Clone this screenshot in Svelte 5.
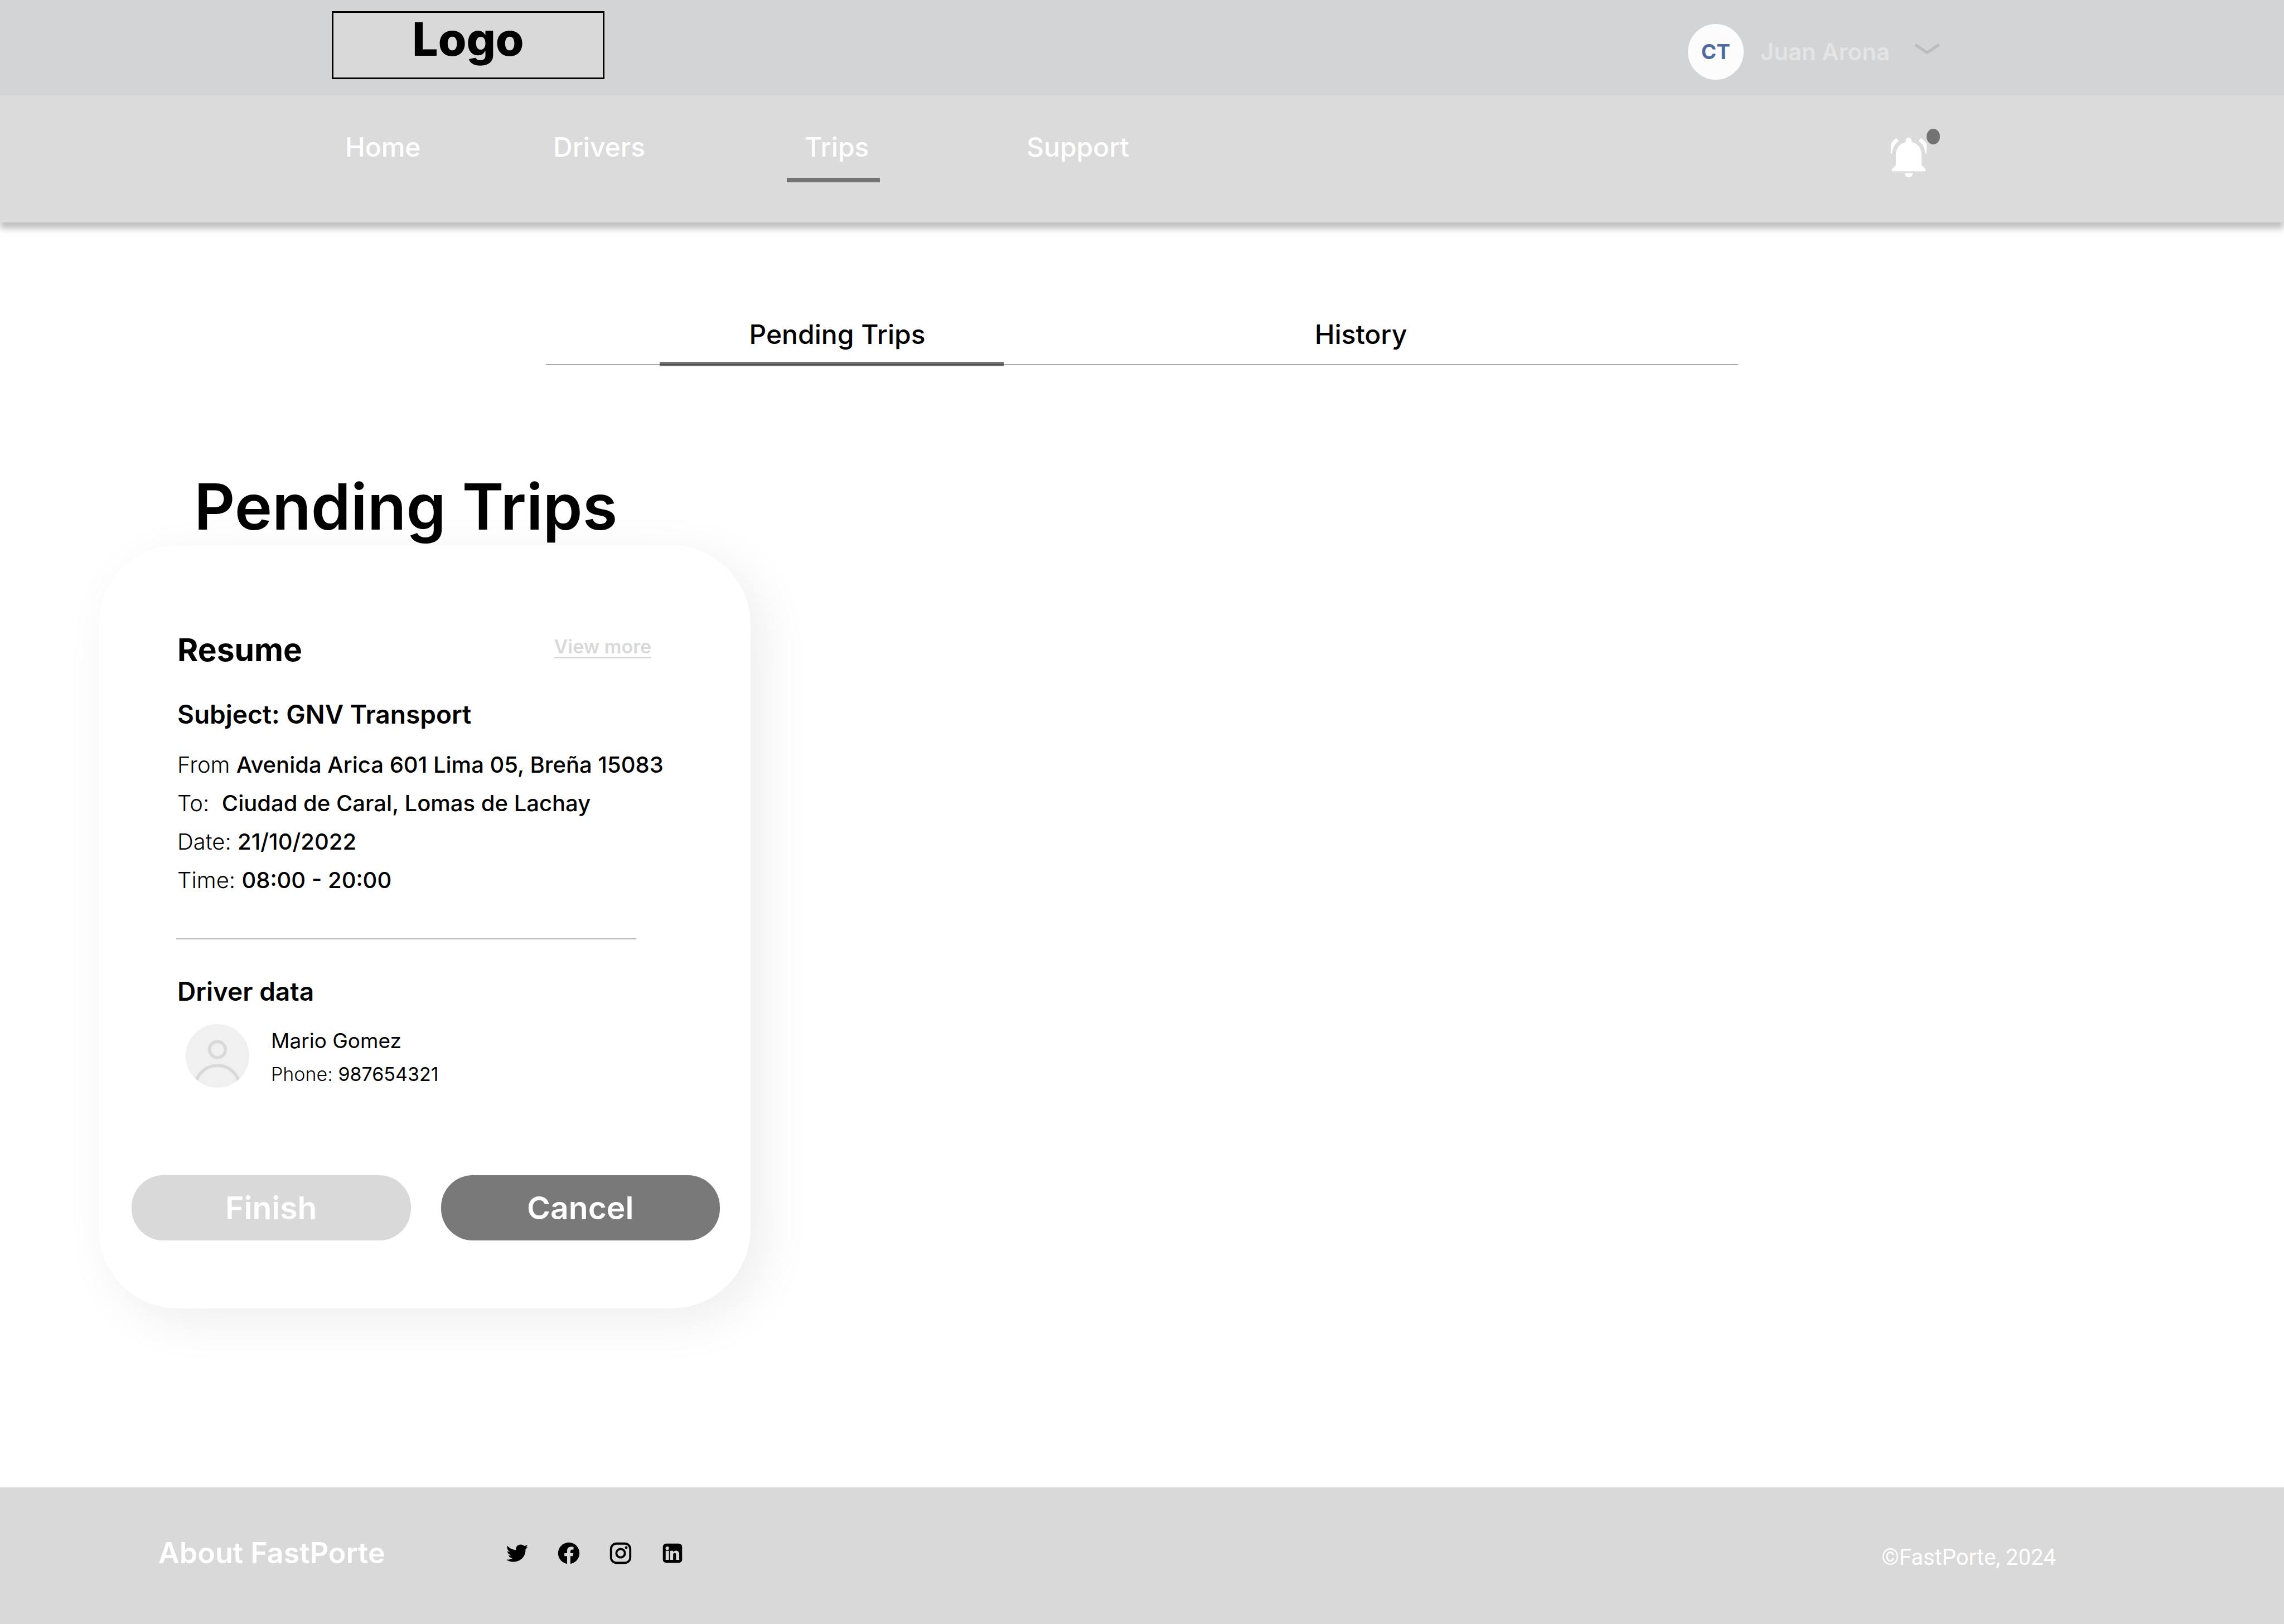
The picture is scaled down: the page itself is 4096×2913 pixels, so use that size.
<script>
  const navItems = ['Home', 'Drivers', 'Trips', 'Support'];
  const tabs = ['Pending Trips', 'History'];

  let activeNav = $state('Trips');
  let activeTab = $state('Pending Trips');

  const details = [
    { label: 'From ', value: 'Avenida Arica 601 Lima 05, Breña 15083' },
    { label: 'To:  ', value: 'Ciudad de Caral, Lomas de Lachay' },
    { label: 'Date: ', value: '21/10/2022' },
    { label: 'Time: ', value: '08:00 - 20:00' }
  ];
</script>

<div class="page">
  <header>
    <div class="topbar">
      <a class="logo" href="#home">Logo</a>
      <button class="account" type="button">
        <span class="initials">CT</span>
        <span class="account-name">Juan Arona</span>
        <svg class="chevron" viewBox="0 0 64 43" aria-hidden="true">
          <path d="M4.6 0L32 18.4L60 0L64 5.7L32 27L0 5.7Z" />
        </svg>
      </button>
    </div>

    <div class="navbar">
      <nav aria-label="Main">
        {#each navItems as item}
          <a
            href={'#' + item.toLowerCase()}
            class:active={item === activeNav}
            aria-current={item === activeNav ? 'page' : undefined}
            onclick={() => (activeNav = item)}>{item}</a>
        {/each}
      </nav>
      <button class="alerts" type="button" aria-label="Notifications">
        <svg class="bell" viewBox="-45 0 90 100" aria-hidden="true">
          <path d="M0 0C4.5 0 7.5 3 7.5 7.5V11C23 14.5 32.5 27 32.5 43V69.500L42.500 79.500V85H-42.500V79.500L-32.500 69.500V43C-32.500 27 -23 14.500 -7.500 11V7.500C-7.500 3 -4.500 0 0 0Z" />
          <path d="M-10.300 89.500H10.300C10.300 95.500 6 100 0 100S-10.300 95.500 -10.300 89.500Z" />
          <path d="M-31.500 1L-24.700 8C-35 15.500 -41.500 27 -42 40H-45.300V15.300C-41.700 9.800 -37 5 -31.500 1Z" />
          <path d="M31.500 1L24.700 8C35 15.500 41.500 27 42 40H45.300V15.300C41.700 9.800 37 5 31.500 1Z" />
        </svg>
        <span class="dot"></span>
      </button>
    </div>
  </header>

  <main>
    <div class="tabs" role="tablist">
      {#each tabs as tab}
        <button
          type="button"
          role="tab"
          class:selected={tab === activeTab}
          aria-selected={tab === activeTab}
          onclick={() => (activeTab = tab)}>{tab}</button>
      {/each}
    </div>

    <h1>Pending Trips</h1>

    <article class="card">
      <div class="info">
        <div class="card-head">
          <h2>Resume</h2>
          <a class="more" href="#details">View more</a>
        </div>
        <h3 class="subject">Subject: GNV Transport</h3>
        <ul class="details">
          {#each details as row}
            <li>{row.label}<strong>{row.value}</strong></li>
          {/each}
        </ul>
        <hr />
        <h3>Driver data</h3>
        <div class="driver">
          <svg class="portrait" viewBox="0 0 40 40" aria-hidden="true">
            <defs>
              <clipPath id="shoulders"><rect x="0" y="20" width="40" height="15.500" /></clipPath>
              <clipPath id="portrait-clip"><circle cx="20" cy="20" r="20" /></clipPath>
            </defs>
            <circle class="portrait-bg" cx="20" cy="20" r="20" />
            <g class="portrait-lines" clip-path="url(#portrait-clip)">
              <circle cx="20" cy="16" r="5" />
              <circle cx="20" cy="40" r="14" clip-path="url(#shoulders)" />
            </g>
          </svg>
          <div>
            <p class="driver-name">Mario Gomez</p>
            <p class="phone">Phone: <span>987654321</span></p>
          </div>
        </div>
      </div>
      <div class="actions">
        <button class="finish" type="button">Finish</button>
        <button class="cancel" type="button">Cancel</button>
      </div>
    </article>
  </main>

  <footer>
    <a class="about" href="#about">About FastPorte</a>
    <div class="social">
      <a href="#twitter" aria-label="Twitter">
        <svg viewBox="0 0 24 24" aria-hidden="true">
          <path d="M3.100 5C5 7.400 7.800 8.900 11 9C10.700 6 12.700 3.900 15.400 3.900C16.800 3.900 18 4.400 18.900 5.200C20 5.100 21 4.600 22 4C21.700 4.900 21.200 5.700 20.400 6.400C21 6.400 21.500 6.300 22 6.100C21.500 6.900 20.800 7.600 20.050 8.200C20.400 15 15.500 20.050 8.600 20.050C6.200 20.050 3.900 19.400 2 18.150C4.300 18.300 6.400 17.800 8.100 16.600C6.200 16.500 4.600 15.500 4 13.900C4.800 14.100 6 14.200 6.900 13.950C4.600 13.500 3.100 11.900 3.050 10.100C3.700 10.500 4.600 10.750 5.500 10.750C3.100 9.300 2.400 7 3.100 5Z" />
        </svg>
      </a>
      <a href="#facebook" aria-label="Facebook">
        <svg viewBox="0 0 24 24" aria-hidden="true">
          <path d="M12 2C6.477 2 2 6.477 2 12c0 4.991 3.657 9.128 8.438 9.879V14.690h-2.540V12h2.540V9.797c0-2.506 1.492-3.790 3.777-3.790 1.094 0 2.238.095 2.238.095v2.460h-1.260c-1.243 0-1.630.771-1.630 1.562V12h2.773l-.443 2.690h-2.330v7.189C18.343 21.129 22 16.990 22 12c0-5.523-4.477-10-10-10z" />
        </svg>
      </a>
      <a href="#instagram" aria-label="Instagram">
        <svg viewBox="0 0 24 24" aria-hidden="true">
          <rect class="outline" x="3" y="3" width="18" height="18" rx="5" />
          <circle class="outline" cx="12" cy="12" r="4" />
          <circle cx="17.250" cy="6.750" r="1.250" />
        </svg>
      </a>
      <a href="#linkedin" aria-label="LinkedIn">
        <svg viewBox="0 0 24 24" aria-hidden="true">
          <path
            fill-rule="evenodd"
            d="M6 3H18A3 3 0 0 1 21 6V18A3 3 0 0 1 18 21H6A3 3 0 0 1 3 18V6A3 3 0 0 1 6 3ZM5.500 7.400A1.600 1.600 0 1 0 8.700 7.400A1.600 1.600 0 1 0 5.500 7.400ZM5.600 9.750V18.200H8.700V9.750ZM9.800 9.750V18.200H12.600V13.900C12.600 12.500 13 11.700 14 11.700S15.300 12.500 15.300 13.700V18.200H18.300V13.200C18.300 10.800 17.200 9.600 15.200 9.600C14 9.600 13.100 10.100 12.600 10.900V9.750Z" />
        </svg>
      </a>
    </div>
    <small>©FastPorte, 2024</small>
  </footer>
</div>

<style>
  :global(body) {
    margin: 0;
    background: #ffffff;
  }

  .page {
    display: flex;
    flex-direction: column;
    min-height: 100vh;
    font-family: Inter, 'Liberation Sans', sans-serif;
    color: #000000;
  }

  .page :is(h1, h2, h3, p, ul) {
    margin: 0;
    padding: 0;
  }

  button {
    margin: 0;
    padding: 0;
    border: 0;
    background: none;
    font-family: inherit;
    color: inherit;
    cursor: pointer;
  }

  a {
    color: inherit;
    text-decoration: none;
  }

  svg {
    display: block;
  }

  header {
    background: #dbdbdb;
    box-shadow: 0 11px 11px rgba(0, 0, 0, 0.25);
  }

  .topbar {
    display: flex;
    justify-content: space-between;
    align-items: flex-start;
    box-sizing: border-box;
    height: 171px;
    padding: 20px 617px 0 595px;
    background: #d3d4d6;
  }

  .logo {
    box-sizing: border-box;
    width: 489px;
    height: 122px;
    border: 3px solid #000000;
    background: #d9d9d9;
    font-size: 82px;
    font-weight: 800;
    line-height: 96px;
    text-align: center;
  }

  .account {
    display: flex;
    align-items: center;
    margin-top: 23px;
  }

  .initials {
    width: 100px;
    border-radius: 50%;
    background: #fcfcfc;
    color: #506ba0;
    font-size: 37px;
    font-weight: 700;
    line-height: 100px;
    text-align: center;
  }

  .account-name {
    margin: 0 44px 0 30px;
    color: #e4e4e4;
    font-size: 42px;
    font-weight: 600;
    line-height: 52px;
  }

  .chevron {
    width: 46px;
    height: 31px;
    fill: #bdbdbd;
  }

  .navbar {
    display: flex;
    justify-content: space-between;
    align-items: flex-start;
    box-sizing: border-box;
    height: 228px;
    padding: 60px 617px 0 619px;
  }

  nav {
    display: grid;
    grid-template-columns: 373px 419px 430px auto;
    justify-items: start;
    padding-top: 4px;
    color: #ffffff;
    font-size: 48px;
    font-weight: 500;
    line-height: 58px;
  }

  nav a {
    padding-bottom: 26px;
  }

  nav .active {
    padding: 0 20px 26px 32px;
    border-bottom: 8px solid #737373;
  }

  .alerts {
    position: relative;
    width: 88px;
    padding-top: 16px;
  }

  .bell {
    width: 64px;
    height: 71px;
    fill: #ffffff;
  }

  .dot {
    position: absolute;
    top: 0;
    right: 0;
    width: 24px;
    height: 28px;
    border-radius: 50%;
    background: #737373;
  }

  main {
    flex: 1;
    padding: 172px 0 320px;
  }

  .tabs {
    display: flex;
    gap: 322px;
    box-sizing: border-box;
    width: min(100%, 2138px);
    margin: 0 auto;
    padding-left: 204px;
    border-bottom: 2px solid #a8a8a8;
  }

  .tabs button {
    box-sizing: border-box;
    width: 617px;
    margin-bottom: -4px;
    padding: 0 0 20px 20px;
    border-bottom: 8px solid transparent;
    font-size: 48px;
    font-weight: 500;
    line-height: 58px;
  }

  .tabs .selected {
    border-bottom-color: rgba(0, 0, 0, 0.55);
  }

  .page h1 {
    position: relative;
    z-index: 1;
    margin: 185px 0 0 348px;
    font-size: 114px;
    font-weight: 600;
    line-height: 138px;
  }

  .card {
    box-sizing: border-box;
    width: 1169px;
    margin-left: 177px;
    padding: 154px 55px 122px 59px;
    border-radius: 142px;
    background: #ffffff;
    box-shadow: 24px 22px 90px rgba(0, 0, 0, 0.07);
  }

  .info {
    padding-left: 82px;
  }

  .card-head {
    display: flex;
    justify-content: space-between;
    align-items: flex-start;
    margin-right: 123px;
  }

  h2 {
    font-size: 57px;
    font-weight: 700;
    line-height: 68px;
  }

  .more {
    padding-top: 7px;
    color: #d9d9d9;
    font-size: 34px;
    font-weight: 600;
    line-height: 42px;
    text-decoration: underline;
    text-decoration-thickness: 3px;
    text-underline-offset: 6px;
    text-decoration-skip-ink: none;
  }

  h3 {
    font-size: 46px;
    font-weight: 600;
    line-height: 56px;
  }

  .page .subject {
    margin: 53px 0 28px;
  }

  .details {
    list-style: none;
    font-size: 40px;
    font-weight: 300;
    line-height: 69px;
    white-space: pre;
  }

  .details strong {
    font-weight: 500;
  }

  hr {
    height: 2px;
    margin: 70px 150px 65px -2px;
    border: 0;
    background: #b8b8b8;
  }

  .driver {
    display: flex;
    align-items: flex-start;
    gap: 39px;
    margin-top: 31px;
    padding-left: 15px;
    line-height: 60px;
  }

  .portrait {
    width: 114px;
    height: 114px;
  }

  .portrait-bg {
    fill: #f0f0f0;
  }

  .portrait-lines {
    fill: none;
    stroke: #d9d9d9;
    stroke-width: 2;
  }

  .driver-name {
    font-size: 37px;
  }

  .phone {
    font-size: 34px;
    font-weight: 300;
  }

  .phone span {
    font-weight: 400;
  }

  .actions {
    display: flex;
    gap: 54px;
    margin-top: 151px;
  }

  .actions button {
    flex: 1;
    height: 117px;
    border-radius: 57px;
    color: #ffffff;
    font-size: 57px;
    font-weight: 600;
    line-height: 68px;
  }

  .actions .finish {
    background: #d9d9d9;
  }

  .actions .cancel {
    background: #797979;
  }

  footer {
    display: flex;
    align-items: center;
    padding: 87px 409px 96px 284px;
    background: #d9d9d9;
    color: #ffffff;
  }

  .about {
    font-size: 52px;
    font-weight: 600;
    line-height: 62px;
  }

  .social {
    display: flex;
    gap: 47px;
    margin-left: 213px;
  }

  .social svg {
    width: 46px;
    height: 46px;
    fill: #000000;
  }

  .social .outline {
    fill: none;
    stroke: #000000;
    stroke-width: 2;
  }

  small {
    margin-left: auto;
    padding-top: 16px;
    font-family: Roboto, 'Liberation Sans', sans-serif;
    font-size: 40px;
    line-height: 46px;
  }
</style>
